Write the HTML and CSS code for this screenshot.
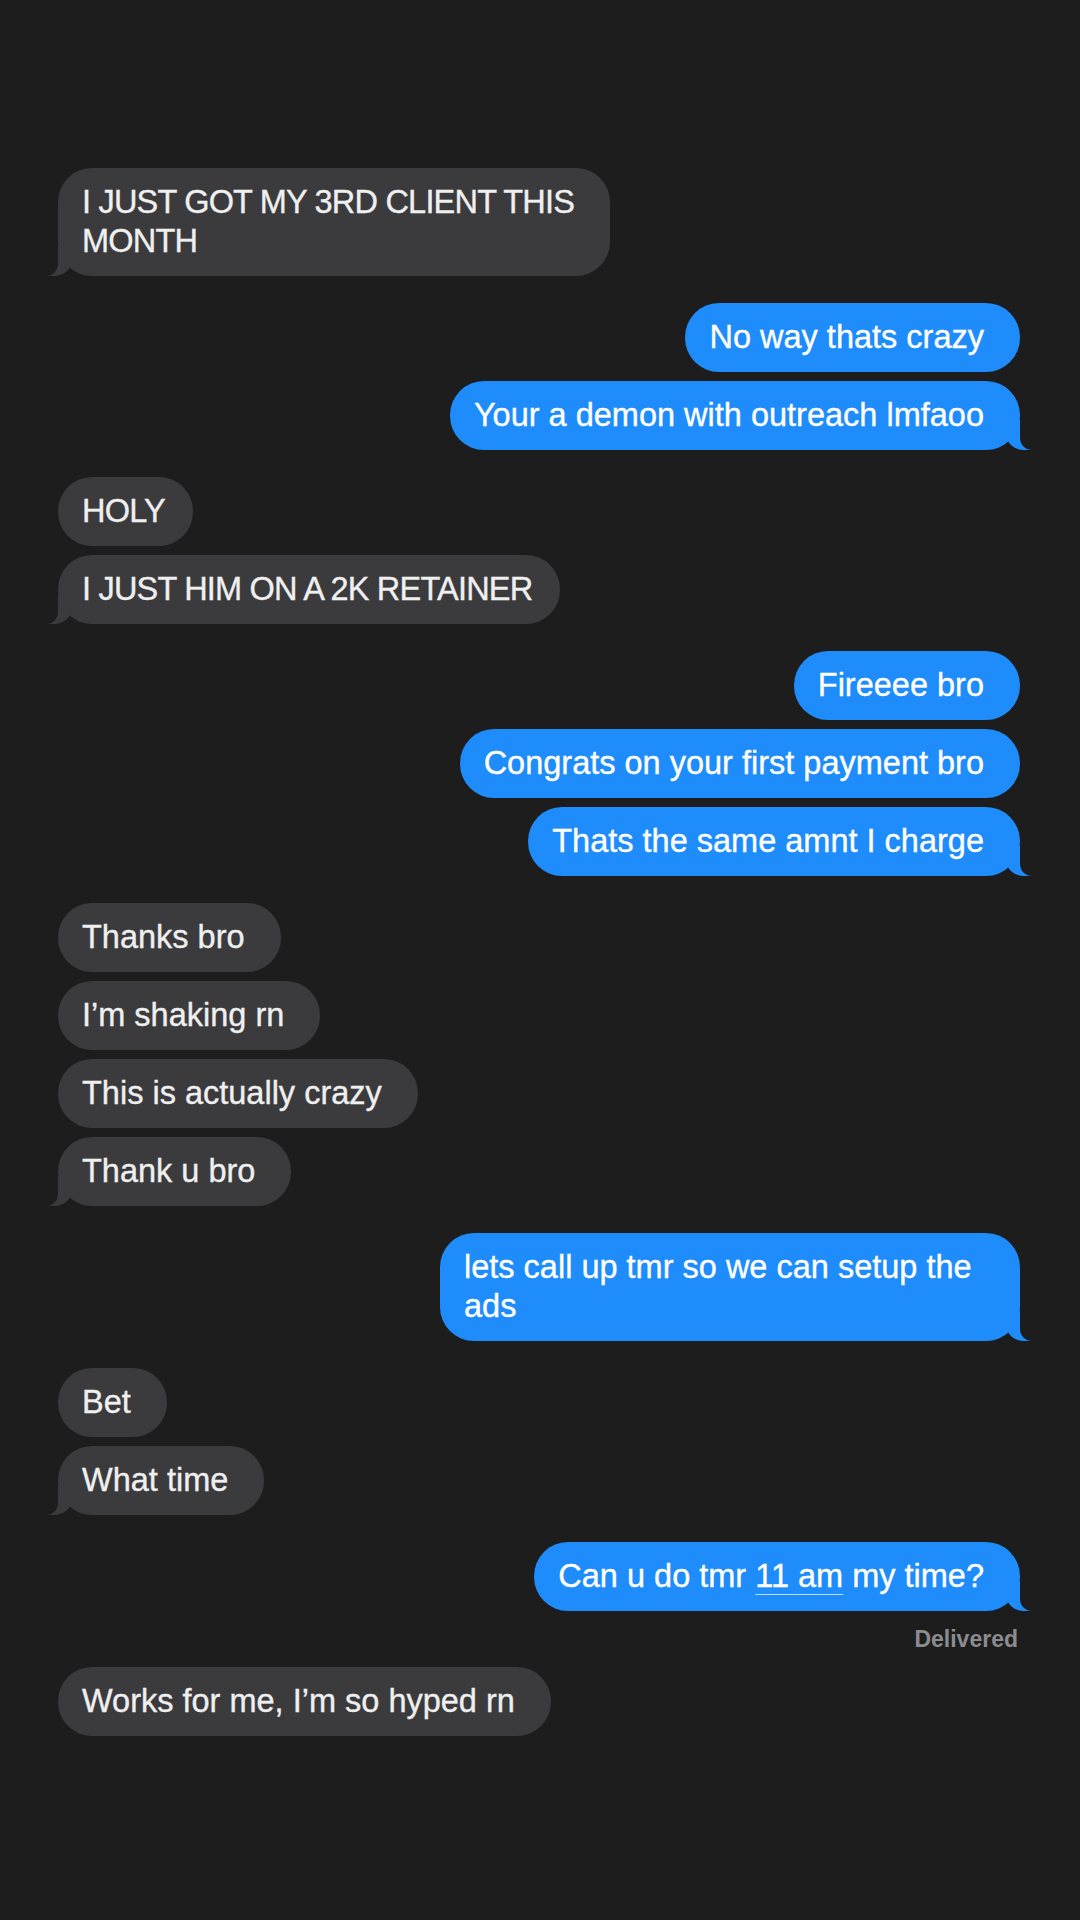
FILE: index.html
```html
<!DOCTYPE html>
<html lang="en">
<head>
  <meta charset="UTF-8">
  <title>Messages</title>
  <link rel="stylesheet" href="styles.css">
</head>
<body>
  <main class="thread">

    <!-- them -->
    <div class="group in">
      <p class="bubble caps tail">I JUST GOT MY 3RD CLIENT THIS MONTH</p>
    </div>

    <!-- me -->
    <div class="group out">
      <p class="bubble">No way thats crazy</p>
      <p class="bubble tail">Your a demon with outreach lmfaoo</p>
    </div>

    <div class="group in">
      <p class="bubble caps">HOLY</p>
      <p class="bubble caps tail">I JUST HIM ON A 2K RETAINER</p>
    </div>

    <div class="group out">
      <p class="bubble">Fireeee bro</p>
      <p class="bubble">Congrats on your first payment bro</p>
      <p class="bubble tail">Thats the same amnt I charge</p>
    </div>

    <div class="group in">
      <p class="bubble">Thanks bro</p>
      <p class="bubble">I’m shaking rn</p>
      <p class="bubble">This is actually crazy</p>
      <p class="bubble tail">Thank u bro</p>
    </div>

    <div class="group out">
      <p class="bubble tail">lets call up tmr so we can setup the ads</p>
    </div>

    <div class="group in">
      <p class="bubble">Bet</p>
      <p class="bubble tail">What time</p>
    </div>

    <div class="group out">
      <p class="bubble tail">Can u do tmr <span class="date-link">11 am</span> my time?</p>
      <div class="status">Delivered</div>
    </div>

    <div class="group in">
      <p class="bubble">Works for me, I’m so hyped rn</p>
    </div>

  </main>
</body>
</html>
```

FILE: styles.css
```css
body {
  margin: 0;
  background: #1d1d1d;
  font-family: "Liberation Sans", Arial, sans-serif;
  -webkit-font-smoothing: antialiased;
}

/* whole conversation */
.thread {
  display: flex;
  flex-direction: column;
  gap: 27px;
  padding: 168px 60px 0 58px;
}

/* consecutive messages from one side */
.group {
  display: flex;
  flex-direction: column;
  gap: 9px;
}
.group.in  { align-items: flex-start; }
.group.out { align-items: flex-end; }

.bubble {
  position: relative;
  margin: 0;
  max-width: 520px;
  padding: 15px 36px 15px 24px;
  border-radius: 34px;
  font-size: 32.5px;
  line-height: 39px;
  -webkit-text-stroke: 0.35px currentColor;
}

/* all-caps messages run a little tighter */
.bubble.caps {
  max-width: 500px;
  padding-right: 28px;
  letter-spacing: -0.8px;
}

.in .bubble {
  background: #3b3b3d;
  color: #efeff0;
}
.out .bubble {
  background: #1e8cfa;
  color: #fff;
}

/* tail on the last bubble of a group */
.bubble.tail::before,
.bubble.tail::after {
  content: "";
  position: absolute;
  bottom: 0;
}

.out .bubble.tail::before {
  right: -12px;
  width: 26px;
  height: 30px;
  background: #1e8cfa;
  border-bottom-left-radius: 18px 16px;
}
.out .bubble.tail::after {
  left: 100%;
  width: 26px;
  height: 30px;
  background: #1d1d1d;
  border-bottom-left-radius: 12px;
}

.in .bubble.tail::before {
  left: -12px;
  width: 26px;
  height: 30px;
  background: #3b3b3d;
  border-bottom-right-radius: 18px 16px;
}
.in .bubble.tail::after {
  right: 100%;
  width: 26px;
  height: 30px;
  background: #1d1d1d;
  border-bottom-right-radius: 12px;
}

.date-link {
  text-decoration: underline;
  text-decoration-thickness: 1px;
  text-decoration-color: rgba(255, 255, 255, 0.7);
  text-underline-offset: 7px;
}

.status {
  margin: 4px 2px -14px 0;
  font-size: 23px;
  font-weight: bold;
  line-height: 30px;
  color: #8c8c90;
}
```
